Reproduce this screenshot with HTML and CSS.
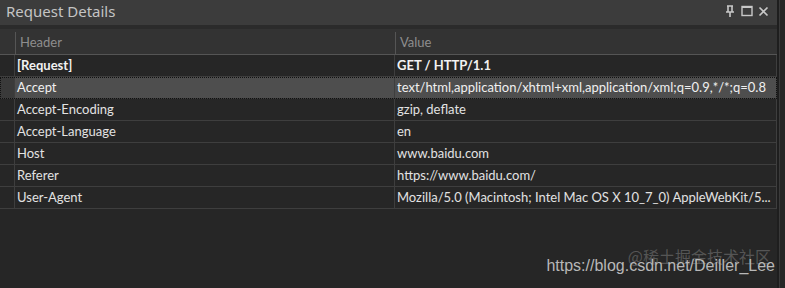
FILE: index.html
```html
<!DOCTYPE html>
<html lang="en">
<head>
    <meta charset="UTF-8">
    <title>Request Details</title>
    <link rel="stylesheet" href="styles.css">
</head>
<body>
    <div class="window">
        <div class="panel">
            <!-- Title Bar -->
            <div class="title-bar">
                <span class="title">Request Details</span>
                <div class="title-icons">
                    <svg width="12" height="13" viewBox="0 0 12 13"><path d="M3 1h6M4 1v6M8 1v6M2 7h8M6 7v5" stroke="#c8c8c8" stroke-width="1.6" fill="none"/></svg>
                    <svg width="12" height="12" viewBox="0 0 12 12"><rect x="1" y="1.5" width="10" height="9" stroke="#c8c8c8" stroke-width="1.4" fill="none"/><path d="M1 2.2h10" stroke="#c8c8c8" stroke-width="1.6"/></svg>
                    <svg width="11" height="11" viewBox="0 0 11 11"><path d="M1.5 1.5l8 8M9.5 1.5l-8 8" stroke="#c8c8c8" stroke-width="1.6"/></svg>
                </div>
            </div>

            <!-- Grid -->
            <div class="grid">
                <div class="row head">
                    <div class="cell stub"></div>
                    <div class="cell">Header</div>
                    <div class="cell">Value</div>
                </div>
                <div class="row bold">
                    <div class="cell stub"></div>
                    <div class="cell">[Request]</div>
                    <div class="cell">GET / HTTP/1.1</div>
                </div>
                <div class="row selected">
                    <div class="cell stub"></div>
                    <div class="cell">Accept</div>
                    <div class="cell">text/html,application/xhtml+xml,application/xml;q=0.9,*/*;q=0.8</div>
                </div>
                <div class="row">
                    <div class="cell stub"></div>
                    <div class="cell">Accept-Encoding</div>
                    <div class="cell">gzip, deflate</div>
                </div>
                <div class="row">
                    <div class="cell stub"></div>
                    <div class="cell">Accept-Language</div>
                    <div class="cell">en</div>
                </div>
                <div class="row">
                    <div class="cell stub"></div>
                    <div class="cell">Host</div>
                    <div class="cell">www.baidu.com</div>
                </div>
                <div class="row">
                    <div class="cell stub"></div>
                    <div class="cell">Referer</div>
                    <div class="cell">https://www.baidu.com/</div>
                </div>
                <div class="row">
                    <div class="cell stub"></div>
                    <div class="cell">User-Agent</div>
                    <div class="cell">Mozilla/5.0 (Macintosh; Intel Mac OS X 10_7_0) AppleWebKit/5...</div>
                </div>
            </div>
        </div>
        <div class="edge"></div>
    </div>

    <!-- Watermark -->
    <div class="watermark">
        <span class="mark-cn">@稀土掘金技术社区</span>
        <span class="mark-url">https://blog.csdn.net/Deiller_Lee</span>
    </div>
</body>
</html>
```

FILE: styles.css
```css
* {
    box-sizing: border-box;
    margin: 0;
    padding: 0;
}

body {
    background: #262626;
    font-family: 'Lato', 'Noto Sans', sans-serif;
    width: 785px;
    height: 288px;
    overflow: hidden;
    position: relative;
}

.window {
    display: flex;
    height: 288px;
}

.panel {
    width: 777px;
    display: flex;
    flex-direction: column;
}

.edge {
    width: 3px;
    background: #1e1e1e;
    border-right: 1px solid #3a3a3a;
}

/* Title Bar */
.title-bar {
    height: 29px;
    background: #3c3c3c;
    display: flex;
    align-items: center;
    justify-content: space-between;
    padding: 0 8px 0 6px;
    border-bottom: 4px solid #2b2b2b;
}

.title {
    color: #c4c4c4;
    font-family: 'Noto Sans', sans-serif;
    font-size: 15px;
    margin-top: -3px;
}

.title-icons {
    display: flex;
    align-items: center;
    gap: 5px;
    margin-top: -3px;
}

/* Grid Styles */
.grid {
    display: flex;
    flex-direction: column;
}

.row {
    display: grid;
    grid-template-columns: 15px 380px 1fr;
    height: 22px;
    border-bottom: 1px solid #3e3e3e;
    color: #e2e2e2;
    font-size: 13px;
}

.cell {
    padding-left: 2px;
    line-height: 21px;
    white-space: nowrap;
    overflow: hidden;
    border-right: 1px solid #3e3e3e;
}

.cell.stub {
    padding: 0;
}

.row.head {
    height: 26px;
    background: #333333;
    color: #8e8e8e;
    border-bottom: 1px solid #555555;
}

.row.head .cell {
    padding-left: 4px;
    border-right: none;
    border-left: 1px solid #555555;
    margin-top: 3px;
    line-height: 21px;
}

.row.head .cell.stub {
    border-left: none;
}

.row.bold {
    font-weight: bold;
    color: #f2f2f2;
}

.row.selected {
    background: #4e4e4e;
    outline: 1px dotted #111111;
    outline-offset: -1px;
    color: #f0f0f0;
}

.row.selected .cell.stub {
    background: #3a3a3a;
}

/* Watermark */
.watermark {
    position: absolute;
    right: 10px;
    bottom: 8px;
    width: 240px;
    height: 30px;
}

.mark-cn {
    position: absolute;
    right: 4px;
    top: -6px;
    font-family: 'Noto Sans CJK SC', sans-serif;
    font-size: 16px;
    color: rgba(255, 255, 255, 0.22);
}

.mark-url {
    position: absolute;
    right: 0;
    top: 7px;
    font-family: 'Liberation Sans', sans-serif;
    font-size: 16px;
    color: #b8b8b8;
}
```
